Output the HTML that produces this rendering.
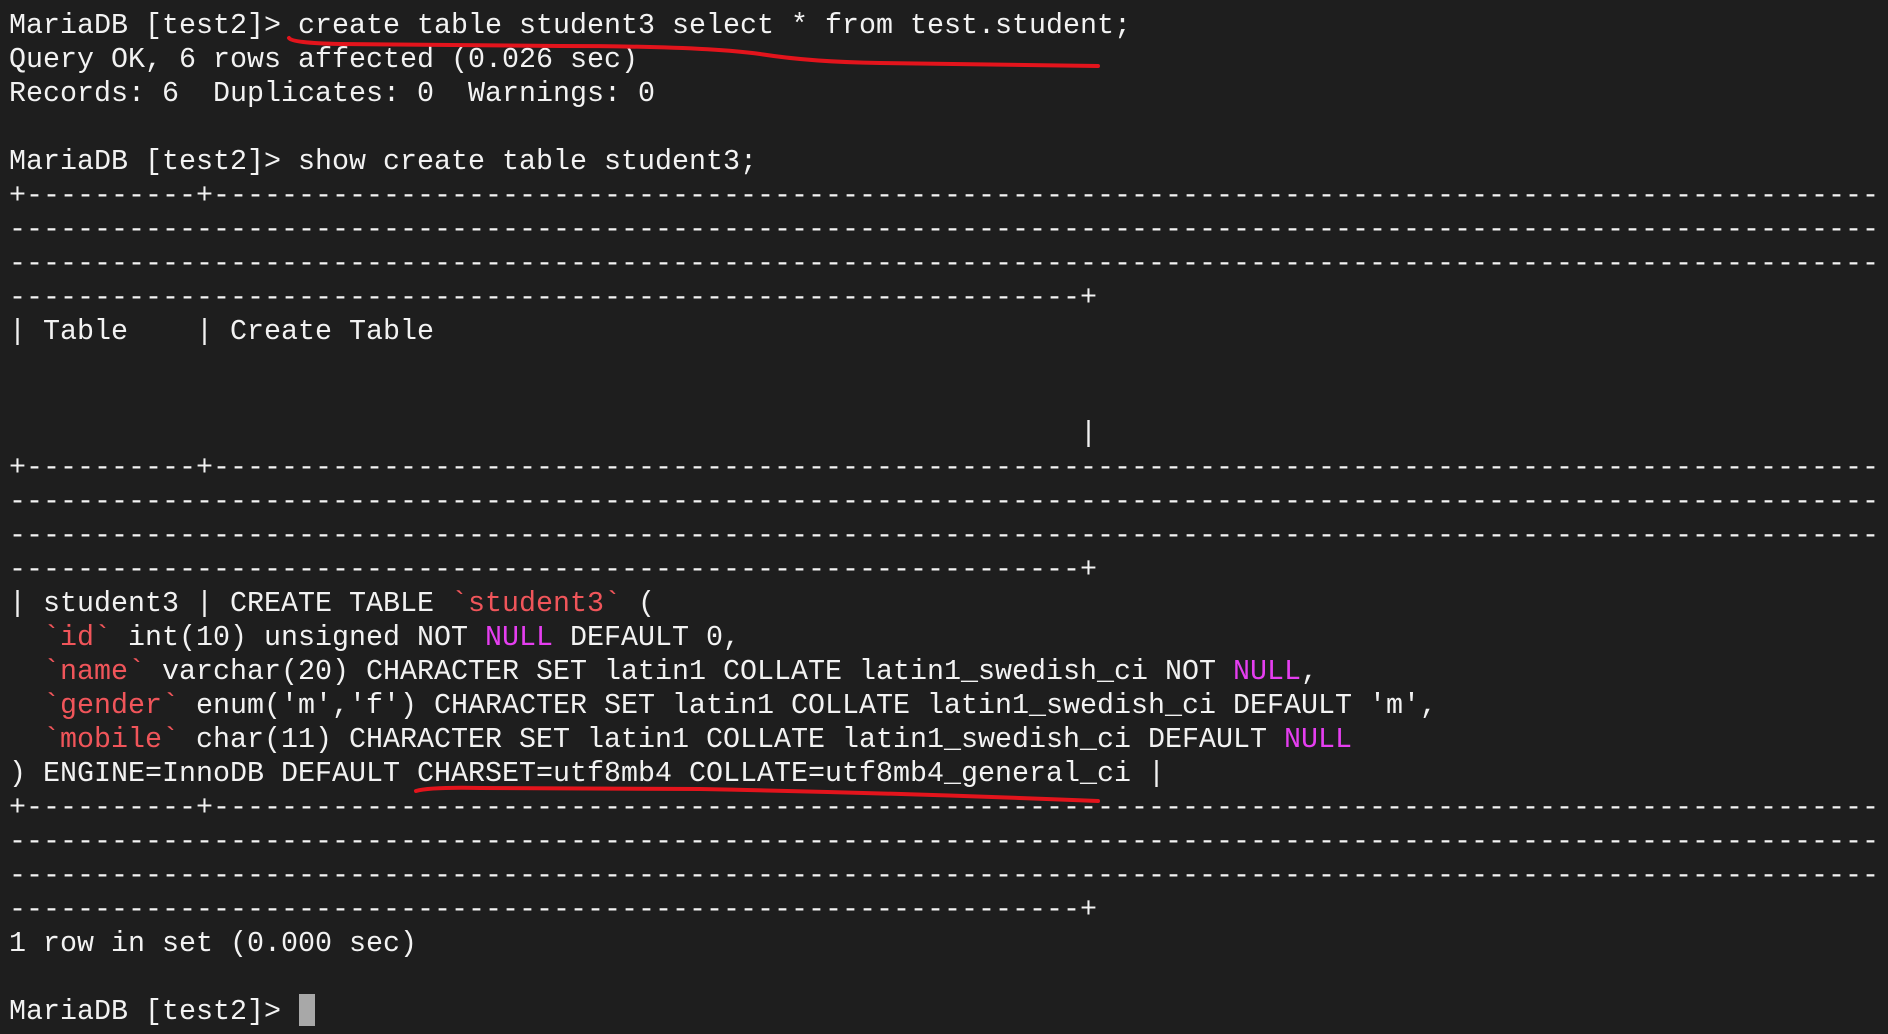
<!DOCTYPE html>
<html><head><meta charset="utf-8"><style>
html,body{margin:0;padding:0;background:#1e1e1e;width:1888px;height:1034px;overflow:hidden}
pre{margin:0;padding:9px 0 0 9px;font-family:"Liberation Mono",monospace;font-size:28.33px;line-height:34px;color:#f2f2f2;white-space:pre}
.r{color:#f0555a}.m{color:#e53ef0}
svg{position:absolute;left:0;top:0}
</style></head><body>
<pre>MariaDB [test2]&gt; create table student3 select * from test.student;
Query OK, 6 rows affected (0.026 sec)
Records: 6  Duplicates: 0  Warnings: 0

MariaDB [test2]&gt; show create table student3;
+----------+--------------------------------------------------------------------------------------------------
--------------------------------------------------------------------------------------------------------------
--------------------------------------------------------------------------------------------------------------
---------------------------------------------------------------+
| Table    | Create Table


                                                               |
+----------+--------------------------------------------------------------------------------------------------
--------------------------------------------------------------------------------------------------------------
--------------------------------------------------------------------------------------------------------------
---------------------------------------------------------------+
| student3 | CREATE TABLE <span class="r">`student3`</span> (
  <span class="r">`id`</span> int(10) unsigned NOT <span class="m">NULL</span> DEFAULT 0,
  <span class="r">`name`</span> varchar(20) CHARACTER SET latin1 COLLATE latin1_swedish_ci NOT <span class="m">NULL</span>,
  <span class="r">`gender`</span> enum('m','f') CHARACTER SET latin1 COLLATE latin1_swedish_ci DEFAULT 'm',
  <span class="r">`mobile`</span> char(11) CHARACTER SET latin1 COLLATE latin1_swedish_ci DEFAULT <span class="m">NULL</span>
) ENGINE=InnoDB DEFAULT CHARSET=utf8mb4 COLLATE=utf8mb4_general_ci |
+----------+--------------------------------------------------------------------------------------------------
--------------------------------------------------------------------------------------------------------------
--------------------------------------------------------------------------------------------------------------
---------------------------------------------------------------+
1 row in set (0.000 sec)

MariaDB [test2]&gt; </pre>
<svg width="1888" height="1034">
<path d="M289,38 Q292,43 340,44 L560,46 Q700,46 760,54 Q810,62 880,63 L1098,66" fill="none" stroke="#e3141c" stroke-width="4" stroke-linecap="round"/>
<path d="M416,791 Q430,787 480,788 L700,789 Q900,793 1098,801" fill="none" stroke="#e3141c" stroke-width="4" stroke-linecap="round"/>
<rect x="299" y="994" width="16" height="32" fill="#a8a8a8"/>
</svg>
</body></html>
